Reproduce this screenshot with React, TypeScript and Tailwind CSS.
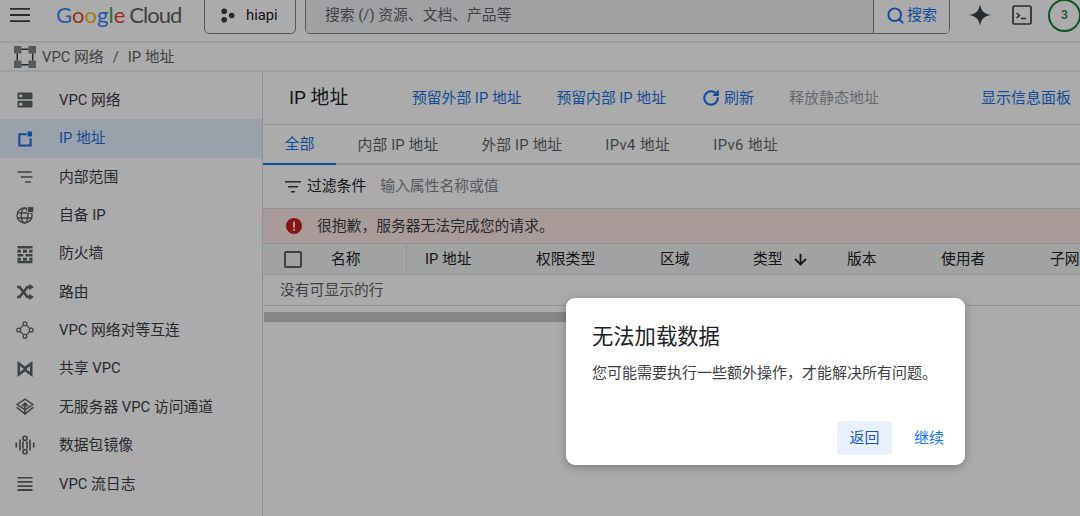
import React from "react";
import { ArrowDown, RotateCw, Search } from "lucide-react";

const font = { fontFamily: '"Roboto","Noto Sans CJK SC",sans-serif' };

function I({ children }: { children: React.ReactNode }) {
  return (
    <svg viewBox="0 0 24 24" className="w-[20px] h-[20px]" fill="#5f6368">
      {children}
    </svg>
  );
}

const navIcons: Record<string, React.ReactNode> = {
  vpc: <path d="M20 13H4c-.55 0-1 .45-1 1v6c0 .55.45 1 1 1h16c.55 0 1-.45 1-1v-6c0-.55-.45-1-1-1zM7 19c-1.100 0-2-.9-2-2s.9-2 2-2 2 .9 2 2-.9 2-2 2zM20 3H4c-.55 0-1 .45-1 1v6c0 .55.45 1 1 1h16c.55 0 1-.45 1-1V4c0-.55-.45-1-1-1zM7 9c-1.100 0-2-.9-2-2s.9-2 2-2 2 .9 2 2-.9 2-2 2z" />,
  ip: <path fill="#1a73e8" d="M4 5h10v2.400H6.500V18.500h11V11H20v10H4zM15 3h5.500v6H15z" />,
  range: <path d="M3 5h17v2H3zM7 11h14v2H7zM12 17h7v2h-7z" />,
  byoip: (
    <g fill="none" stroke="#5f6368" strokeWidth="1.700">
      <circle cx="11.500" cy="12.500" r="9" />
      <ellipse cx="11.500" cy="12.500" rx="4" ry="9" />
      <path d="M2.500 9.500h18M2.500 15.500h18" />
      <rect x="15" y="2" width="7.500" height="7" fill="#5f6368" stroke="#ffffff" strokeWidth="1" />
    </g>
  ),
  firewall: <path d="M3 2.500h18v3H3zM3 7h4v3.500H3zM9.500 7h5v3.500h-5zM17 7h4v3.500h-4zM3 12h7v3H3zM12.500 12H21v3h-8.500zM3 16.500h4V20H3zM9.500 16.500h5V20h-5zM17 16.500h4V20h-4zM3 20.500h18v2.500H3z" />,
  route: (
    <g fill="none" stroke="#5f6368" strokeWidth="3.200">
      <path d="M2.500 6h3l9.500 12h3" />
      <path d="M2.500 18h3l9.500-12h3" />
      <path fill="#5f6368" stroke="none" d="M17 2l5.500 4-5.500 4zM17 14l5.500 4-5.500 4z" />
    </g>
  ),
  peer: (
    <g fill="none" stroke="#5f6368" strokeWidth="1.500">
      <circle cx="12" cy="4.500" r="2.300" />
      <circle cx="4.500" cy="12" r="2.300" />
      <circle cx="19.500" cy="12" r="2.300" />
      <circle cx="12" cy="19.500" r="2.300" />
      <path d="M10.300 6.200L6.200 10.300M13.700 6.200l4.100 4.100M6.200 13.700l4.100 4.100M17.800 13.700l-4.100 4.100" />
    </g>
  ),
  shared: <path fillRule="evenodd" d="M3 2.500l9 6.500 9-6.500v19l-9-6.500-9 6.500zM6 8.500v7l4.500-3.500zM18 8.500L13.500 12l4.500 3.500z" />,
  serverless: (
    <g fill="none" stroke="#5f6368" strokeWidth="1.700">
      <path d="M12 2.500l9.500 6.500L12 15.500 2.500 9z" />
      <path d="M2 12.500l2 1.500 8 6.500 8-6.500 2-1.500" />
      <path d="M8.500 11L12 7.500l3.500 3.500M12 8v13" strokeWidth="2" />
    </g>
  ),
  mirror: (
    <g fill="none" stroke="#5f6368">
      <circle cx="12" cy="4" r="2.500" strokeWidth="2" />
      <circle cx="12" cy="20" r="2.500" strokeWidth="2" />
      <path d="M9.500 7.500v9M14.500 7.500v9M6 5.500v13M18 5.500v13M1.500 9v6M22.500 9v6" strokeWidth="2" />
    </g>
  ),
  flow: <path d="M3 3.500h18v2H3zM3 8.500h18v2H3zM3 13.500h18v2H3zM3 18h18v2.500H3z" />,
};

const nav = [
  ["vpc", "VPC 网络"],
  ["ip", "IP 地址"],
  ["range", "内部范围"],
  ["byoip", "自备 IP"],
  ["firewall", "防火墙"],
  ["route", "路由"],
  ["peer", "VPC 网络对等互连"],
  ["shared", "共享 VPC"],
  ["serverless", "无服务器 VPC 访问通道"],
  ["mirror", "数据包镜像"],
  ["flow", "VPC 流日志"],
];

const tabs: [string, string][] = [
  ["全部", "text-[15px]"],
  ["内部 IP 地址", "tracking-[0.12px]"],
  ["外部 IP 地址", "tracking-[0.12px]"],
  ["IPv4 地址", "tracking-[0.4px]"],
  ["IPv6 地址", "tracking-[0.4px]"],
];

const cols: [string, string][] = [
  ["IP 地址", "w-[129px] pl-[18px]"],
  ["权限类型", "w-[124px]"],
  ["区域", "w-[93px]"],
];

export default function App() {
  return (
    <div className="relative w-[1080px] h-[516px] overflow-hidden bg-white text-[#3c4043] text-[14.800px] flex flex-col" style={font}>
      {/* Top bar */}
      <header className="h-[43px] shrink-0 flex items-start border-b-2 border-[#e8eaed] overflow-hidden">
        <div className="w-[204px] h-[30px] flex items-center shrink-0">
          <svg viewBox="0 0 20 14" className="ml-[10px] w-[20px] h-[14px]" fill="#3c4043">
            <path d="M0 0h20v1.800H0zM0 6.100h20v1.800H0zM0 12.200h20V14H0z" />
          </svg>
          <div className="ml-[26px] text-[22px] leading-none whitespace-nowrap flex" style={{ fontFamily: '"Lato",sans-serif' }}>
            <span className="text-[#4285f4]">G</span>
            <span className="text-[#ea4335]">o</span>
            <span className="text-[#fbbc04]">o</span>
            <span className="text-[#4285f4]">g</span>
            <span className="text-[#34a853]">l</span>
            <span className="text-[#ea4335]">e</span>
            <span className="ml-[4px] text-[#5f6368] tracking-[-1px]">Cloud</span>
          </div>
        </div>
        <div className="-mt-[4px] h-[38px] w-[92px] shrink-0 rounded-[5px] border border-[#80868b] flex items-center pl-[15px] gap-[11px]">
          <svg viewBox="0 0 16 16" className="w-[15px] h-[15px]" fill="#3c4043">
            <circle cx="4.500" cy="3.500" r="3" />
            <circle cx="12.500" cy="8" r="3" />
            <circle cx="4.500" cy="12.500" r="3" />
          </svg>
          <span className="text-[#202124]">hiapi</span>
        </div>
        <div className="-mt-[4px] ml-[9px] h-[38px] w-[645px] shrink-0 rounded-[5px] border border-[#80868b] flex overflow-hidden">
          <div className="flex-1 bg-[#eff1f4] flex items-center pl-[19px] text-[#5f6368]">搜索 (/) 资源、文档、产品等</div>
          <div className="w-[76px] bg-white border-l border-[#80868b] flex items-center pl-[12px] gap-[2px] text-[#1a73e8] text-[15px]">
            <Search className="w-[19px] h-[19px]" strokeWidth={2.500} />
            <span>搜索</span>
          </div>
        </div>
        <div className="h-[30px] flex items-center ml-[19px]">
          <svg viewBox="0 0 24 24" className="w-[22px] h-[22px]" fill="#3c4043">
            <path d="M12 0c1 7 4 11 12 12-8 1-11 5-12 12-1-7-4-11-12-12 8-1 11-5 12-12z" />
          </svg>
          <svg viewBox="0 0 20 20" className="ml-[21px] w-[20px] h-[20px]" fill="none" stroke="#3c4043" strokeWidth="1.700">
            <rect x="1" y="1" width="18" height="18" rx="1.500" />
            <path d="M4.500 8l3 2.500-3 2.500M9 13.500h5" strokeWidth="1.500" />
          </svg>
          <div className="ml-[16px] w-[33px] h-[33px] rounded-full border-2 border-[#188038] flex items-center justify-center text-[12px] font-medium text-[#188038] shrink-0">3</div>
        </div>
      </header>

      {/* Breadcrumb */}
      <div className="h-[29px] shrink-0 flex items-center pt-[1px] border-b-2 border-[#e8eaed] text-[#5f6368]">
        <svg viewBox="0 0 22 22" className="ml-[14px] w-[22px] h-[22px]" fill="#80868b">
          <path d="M0 0h7.500v7.500H0zM14.500 0H22v7.500h-7.500zM0 14.500h7.500V22H0zM14.500 14.500H22V22h-7.500z" />
          <path fill="#3c4043" d="M7.500 2.500h7V4h-7zM7.500 18h7v1.500h-7zM2.500 7.500H4v7H2.500zM18 7.500h1.500v7H18z" />
        </svg>
        <span className="ml-[6px]">VPC 网络</span>
        <span className="ml-[9px]">/</span>
        <span className="ml-[9px]">IP 地址</span>
      </div>

      <div className="flex flex-1 min-h-0">
        {/* Sidebar */}
        <aside className="w-[263px] shrink-0 border-r border-[#dadce0] pt-[9px]">
          {nav.map(([k, label], i) => (
            <div key={k} className={`h-[38.350px] flex items-center ${i === 1 ? "bg-[#e8f0fe] text-[#1a73e8]" : ""}`}>
              <div className="ml-[15px] w-[20px] h-[20px] flex items-center justify-center">
                <I>{navIcons[k]}</I>
              </div>
              <span className="ml-[24px]">{label}</span>
            </div>
          ))}
        </aside>

        {/* Main */}
        <main className="flex-1 min-w-0 flex flex-col">
          <div className="h-[53px] shrink-0 flex items-center border-b border-[#dadce0] pl-[26px] pr-[9px] text-[#1a73e8]">
            <span className="text-[#202124] text-[18.800px] w-[123px]">IP 地址</span>
            <span>预留外部 IP 地址</span>
            <span className="ml-[35px]">预留内部 IP 地址</span>
            <RotateCw className="ml-[36px] w-[18px] h-[18px]" strokeWidth={2.800} />
            <span className="ml-[4px] text-[15px]">刷新</span>
            <span className="ml-[35px] text-[#9aa0a6] text-[15px]">释放静态地址</span>
            <span className="ml-auto text-[15px]">显示信息面板</span>
          </div>
          <div className="h-[40px] shrink-0 flex items-stretch border-b-2 border-[#dadce0]">
            {tabs.map(([t, c], i) => (
              <div key={t} className={`px-[21.500px] flex items-center -mb-[2px] ${c} ${i === 0 ? "text-[#1a73e8] border-b-2 border-[#1a73e8]" : "text-[#5f6368]"}`}>
                {t}
              </div>
            ))}
          </div>
          <div className="h-[44px] shrink-0 flex items-center pl-[22px] border-b border-[#dadce0]">
            <svg viewBox="0 0 16 12" className="w-[16px] h-[12px]" fill="#3c4043">
              <path d="M0 0h16v1.600H0zM3 5h10v1.600H3zM6 10h4v1.600H6z" />
            </svg>
            <span className="ml-[6px] text-[#202124]">过滤条件</span>
            <span className="ml-[14px] text-[#80868b]">输入属性名称或值</span>
          </div>
          <div className="h-[35px] shrink-0 flex items-center pl-[23px] bg-[#fce8e6] border-b border-[#dadce0] text-[#3c4043]">
            <svg viewBox="0 0 16 16" className="w-[16px] h-[16px]">
              <circle cx="8" cy="8" r="8" fill="#c5221f" />
              <path d="M7 3.500h2v6H7zM7 10.800h2v2H7z" fill="#fce8e6" />
            </svg>
            <span className="ml-[15px]">很抱歉，服务器无法完成您的请求。</span>
          </div>
          <div className="h-[31px] shrink-0 flex items-stretch bg-[#f1f3f4] border-b border-[#dadce0] whitespace-nowrap overflow-hidden text-[#202124]">
            <div className="w-[68px] shrink-0 flex items-center pl-[21px]">
              <div className="w-[18px] h-[17px] rounded-[2px] border-2 border-[#5f6368]" />
            </div>
            <div className="w-[76px] shrink-0 flex items-center border-r border-[#dadce0]">名称</div>
            {cols.map(([t, c]) => (
              <div key={t} className={`${c} shrink-0 flex items-center`}>
                {t}
              </div>
            ))}
            <div className="w-[94px] shrink-0 flex items-center">
              类型
              <ArrowDown className="ml-[9px] w-[17px] h-[17px]" strokeWidth={2.500} />
            </div>
            <div className="w-[94px] shrink-0 flex items-center">版本</div>
            <div className="w-[109px] shrink-0 flex items-center">使用者</div>
            <div className="shrink-0 flex items-center">子网</div>
          </div>
          <div className="h-[31px] shrink-0 flex items-center pl-[17px] border-b border-[#dadce0] text-[#5f6368]">没有可显示的行</div>
          <div className="mt-[6px] ml-[1px] h-[10px] w-[500px] bg-[#c8c8c8]" />
        </main>
      </div>

      {/* Scrim and dialog */}
      <div className="absolute inset-0 bg-black/33" />
      <div className="absolute left-[566px] top-[298px] w-[399px] h-[167px] rounded-[9px] bg-white shadow-[0_2px_8px_rgba(0,0,0,0.3)] flex flex-col text-[15px]">
        <div className="mt-[24px] ml-[26px] text-[21.300px] leading-[30px] text-[#202124]">无法加载数据</div>
        <div className="mt-[10px] ml-[26px] leading-[22px] text-[#3c4043]">您可能需要执行一些额外操作，才能解决所有问题。</div>
        <div className="mt-auto mb-[10px] mr-[21px] flex items-center justify-end">
          <div className="w-[55px] h-[34px] rounded-[4px] bg-[#e8f0fe] flex items-center justify-center text-[#185abc]">返回</div>
          <div className="ml-[22px] text-[#1a73e8]">继续</div>
        </div>
      </div>
    </div>
  );
}
